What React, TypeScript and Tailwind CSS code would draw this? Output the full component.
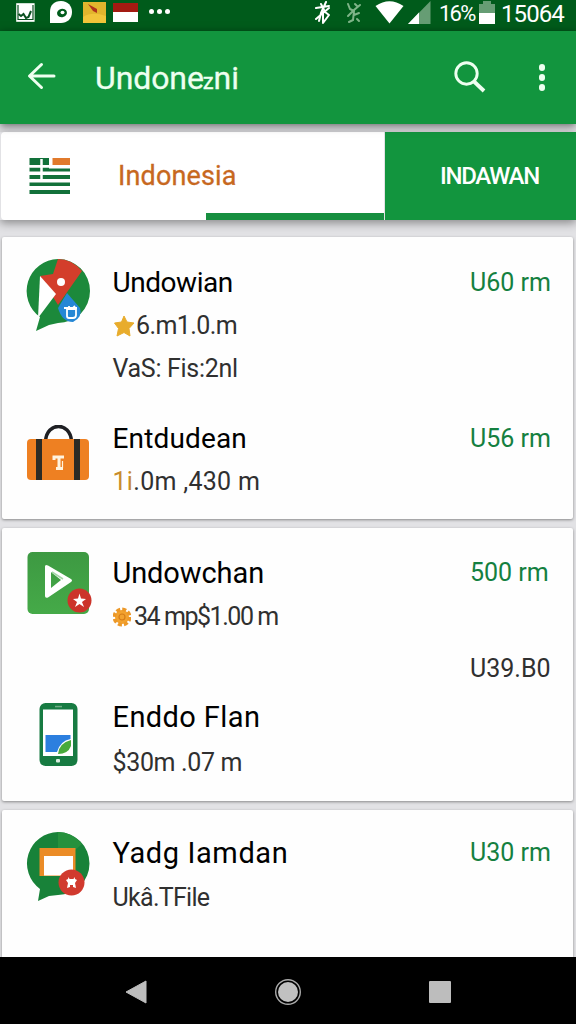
import type { ReactNode } from 'react';

type ListItemProps = {
  icon: ReactNode;
  title: string;
  titleClass: string;
  price: string;
  extraPrice?: string;
  className: string;
  children: ReactNode;
};

function StatusBar() {
  return (
    <div className="flex h-[31px] shrink-0 items-start bg-[#005b1b] text-white">
      <svg className="ml-[15px] mt-[2px]" width="21" height="22" viewBox="0 0 21 22">
        <rect x="1.2" y="1.2" width="18.4" height="18.6" fill="#fff" />
        <path d="M3 3V17.500H18V3" fill="none" stroke="#0a4f20" strokeWidth="1.200" />
        <path d="M3.500 12L6 14L8.500 12L11 16L13.500 15L16 9" fill="none" stroke="#0a4f20" strokeWidth="2" />
      </svg>
      <svg className="ml-[13px] mt-px" width="24" height="23" viewBox="0 0 24 23">
        <path d="M1 22V11C1 4 5 0 12 0C19 0 23 5 23 11C23 18 18 22 12 22Z" fill="#fff" />
        <ellipse cx="13" cy="12" rx="5" ry="4.2" fill="#005b1b" transform="rotate(-15 13 12)" />
        <ellipse cx="13.5" cy="11.5" rx="2" ry="1.7" fill="#fff" />
      </svg>
      <svg className="ml-[10px] mt-[2px]" width="23" height="21" viewBox="0 0 23 21">
        <rect width="23" height="21" fill="#e2b52d" />
        <path d="M0 15Q9 9 23 14V21H0Z" fill="#f2c53a" />
        <path d="M5 2L14 7L14 11L10 9Z" fill="#b0321c" />
      </svg>
      <div className="ml-[7px] mt-[3px] h-[19px] w-[25px] bg-white">
        <div className="h-[8.500px] bg-[#a31b12]" />
      </div>
      <div className="ml-[11px] mt-[9px] flex gap-[3px]">
        <span className="size-[5px] rounded-full bg-white" />
        <span className="size-[5px] rounded-full bg-white" />
        <span className="size-[5px] rounded-full bg-white" />
      </div>

      <svg className="ml-[143px] mt-px" width="19" height="24" viewBox="0 0 19 24" fill="none" stroke="#fff" strokeWidth="2" strokeLinecap="round" strokeLinejoin="round">
        <path d="M13 1L8 12L6 20M3 7L16 5M3 18L10 12L16 7" />
        <path d="M8 3L12 11L16 14L10 22V11" />
      </svg>
      <svg className="ml-[13px] mt-px" width="18" height="24" viewBox="0 0 18 24" fill="none" stroke="#7eb488" strokeWidth="2" strokeLinecap="round">
        <path d="M3 3L5 8L9 10M15 4L9 9L3 15M9 10L8 19L4 21M9 14L14 12M12 18L14 20M10 3L12 5" />
      </svg>
      <svg className="ml-[12px] mt-px" width="29" height="23" viewBox="0 0 29 23">
        <path d="M0.500 5Q14.500 -4.500 28.500 5L14.500 22.500Z" fill="#fff" />
      </svg>
      <svg className="ml-[4px] mt-px" width="23" height="23" viewBox="0 0 23 23">
        <path d="M22.500 0V23H0Z" fill="#669d74" />
        <path d="M11 11.500V23H0Z" fill="#fff" />
      </svg>
      <span className="ml-[8px] w-[36px] whitespace-nowrap text-[22px] leading-[27px] tracking-[-1.800px]">16%</span>
      <svg className="ml-[4px] mt-px" width="16" height="23" viewBox="0 0 16 23">
        <path d="M0 3H4V0H12V3H16V12H0Z" fill="#669d74" />
        <rect y="12" width="16" height="11" fill="#fff" />
      </svg>
      <span className="ml-[6px] text-[24px] leading-[28px] tracking-[-0.900px]">15064</span>
    </div>
  );
}

function AppBar() {
  return (
    <header className="z-10 flex h-[93px] shrink-0 items-center bg-[#12953e] text-white shadow-[0_2px_8px_rgba(0,0,0,0.55)]">
      <svg className="mb-[3px] ml-[27px]" width="29" height="28" viewBox="0 0 29 28" fill="none" stroke="#eefff0" strokeWidth="3" strokeLinecap="round" strokeLinejoin="round">
        <path d="M14.500 2.500L2.500 14L14.500 25.500M3 14H27" />
      </svg>
      <h1 className="ml-[39px] mt-[4px] w-[150px] whitespace-nowrap text-[32px] leading-10 tracking-[-0.100px] text-[#eefff0] [-webkit-text-stroke:0.300px_#eefff0]">
        Undone<span className="ml-[-1px] text-[22px]">z</span>ni
      </h1>
      <svg className="mb-[2px] ml-[208px]" width="34" height="34" viewBox="0 0 34 34" fill="none" stroke="#eefff0">
        <circle cx="13.500" cy="13.500" r="10.700" strokeWidth="2.900" />
        <path d="M21 21.500L31 31" strokeWidth="3.800" />
      </svg>
      <div className="ml-[51.500px] flex flex-col gap-[3.500px]">
        <span className="size-[6.500px] rounded-full bg-[#eefff0]" />
        <span className="size-[6.500px] rounded-full bg-[#eefff0]" />
        <span className="size-[6.500px] rounded-full bg-[#eefff0]" />
      </div>
    </header>
  );
}

function Tabs() {
  return (
    <div className="mt-2 flex h-[88px] shrink-0 shadow-[0_3px_9px_rgba(0,0,0,0.4)]">
      <div className="ml-px flex w-[383px] flex-col rounded-l bg-white">
        <div className="flex h-[80px] items-center pt-[7px]">
          <svg className="ml-[28px]" width="41" height="36" viewBox="0 0 41 36">
            <path d="M0.500 0H20V7H0.500ZM0.500 9.500H20V10.500H41V13.500H0.500ZM0.500 17H41V21H0.500ZM0.500 24.500H41V28H0.500ZM0.500 32H41V36H0.500Z" fill="#12713a" />
            <path d="M12.500 1V22M0.500 8.300H20" stroke="#fff" strokeWidth="2.500" />
            <rect x="23.500" y="0" width="17.500" height="7" fill="#e17a2c" />
          </svg>
          <span className="ml-[48px] mt-[2px] text-[27px] tracking-[0.150px] text-[#c7681f] [-webkit-text-stroke:0.300px_#c7681f]">
            Indonesia
          </span>
        </div>
        <div className="ml-auto mt-px h-[7px] w-[178.500px] bg-[#178f40]" />
      </div>
      <div className="ml-px flex flex-1 items-center bg-[#12953e] pl-[55px] text-[24px] font-medium tracking-[-1.300px] text-white">
        INDAWAN
      </div>
    </div>
  );
}

function Card({ className, children }: { className: string; children: ReactNode }) {
  return (
    <section className={`ml-[2px] mr-[3px] shrink-0 bg-[#fefefe] shadow-[0_1px_3px_rgba(0,0,0,0.4)] ${className}`}>
      {children}
    </section>
  );
}

function ListItem({ icon, title, titleClass, price, extraPrice, className, children }: ListItemProps) {
  return (
    <div className={`flex pl-6 pr-[22px] ${className}`}>
      <div className="mr-[20.500px] w-[66px] shrink-0">{icon}</div>
      <div className="mt-[7px] flex-1 whitespace-nowrap text-[25px] leading-8 text-[#303030]">
        <h2 className={`mb-[11px] leading-8 text-black ${titleClass}`}>{title}</h2>
        {children}
      </div>
      <div className="mt-[7px] w-[81px] whitespace-nowrap text-[25px] leading-8">
        <p className="text-[#148040]">{price}</p>
        {extraPrice && <p className="mt-16 text-[#303030]">{extraPrice}</p>}
      </div>
    </div>
  );
}

function MapIcon() {
  return (
    <svg width="66" height="74" viewBox="0 0 66 74">
      <path d="M32 0A32 32 0 1 1 32 64L23 66L10 72L14 58A32 32 0 0 1 32 0Z" fill="#1c893b" />
      <path d="M32 0Q46 0 56 12L32 46L14 17L27 15Z" fill="#d33e2b" />
      <path d="M14 17L30 35L12 59Z" fill="#fff" />
      <circle cx="35" cy="23" r="4" fill="#fff" />
      <path d="M41 34L54 49Q57 58 47 63Q36 63 32 49Z" fill="#2587d5" />
      <path d="M41 50V57Q41 59 43 59H47Q50 59 50 56V50ZM38 49H51M43 50V47M47 49L49 47" fill="none" stroke="#fff" strokeWidth="1.800" />
    </svg>
  );
}

function BriefcaseIcon() {
  return (
    <svg width="66" height="58" viewBox="0 0 66 58">
      <path d="M19.500 16C21 -3.500 44 -3.500 45.500 16" fill="none" stroke="#1f2024" strokeWidth="3.500" />
      <rect x="1" y="14" width="62" height="41" rx="4" fill="#ee8022" />
      <path d="M10 14H16V55H10ZM48 14H54V55H48Z" fill="#2c2b25" />
      <path d="M28 35V32H38M33 32V43M30 43.500H37" fill="none" stroke="#fff4df" strokeWidth="3" />
      <path d="M36.500 36V43" stroke="#fff4df" strokeWidth="1.200" />
    </svg>
  );
}

function PlayIcon() {
  return (
    <svg width="67" height="66" viewBox="0 0 67 66">
      <defs>
        <linearGradient id="play" x1="0" y1="0" x2="0" y2="1">
          <stop stopColor="#3d9942" />
          <stop offset="1" stopColor="#45aa48" />
        </linearGradient>
      </defs>
      <rect x="1.500" width="61.500" height="62" rx="5" fill="url(#play)" />
      <path d="M19 14.500Q19 12 22 13.500L45 27Q47 28.500 45 30L22 45.500Q19 46.500 19 44ZM25 20V36L35 28Z" fill="#fff" fillRule="evenodd" />
      <path d="M26 20L37 27" stroke="#a5d6a7" strokeWidth="1.500" />
      <circle cx="53.500" cy="48.500" r="12" fill="#cc342a" />
      <path d="M53.500 41.500L55 46.500L60 47L56 50L58 55L53.500 52L49 55L51 50L47 47L52 46.500Z" fill="#fff" />
    </svg>
  );
}

function PhoneIcon() {
  return (
    <svg className="ml-[13px]" width="39" height="64" viewBox="0 0 39 64">
      <rect x="0.500" width="38" height="63" rx="6" fill="#177b42" />
      <rect x="4" y="6.500" width="30" height="46.500" fill="#fff" />
      <rect x="16" y="2.800" width="7" height="1.500" fill="#70ad86" />
      <rect x="17" y="56" width="4" height="3.500" rx="1" fill="#d9ecdf" />
      <path d="M6.500 32H31.500V36Q21 38 18 49H6.500Z" fill="#2c7fdf" />
      <path d="M32 37V43Q29 51 19 51Q20 40 32 37Z" fill="#48aa3b" />
    </svg>
  );
}

function ChatIcon() {
  return (
    <svg width="66" height="72" viewBox="0 0 66 72">
      <path d="M32 0A31.500 31.500 0 0 1 32 63L23 64L12 69L14 57A31.500 31.500 0 0 1 32 0Z" fill="#188239" />
      <path d="M32 0A31.500 31.500 0 0 1 56 12L47 20H32Z" fill="#26913d" />
      <rect x="13.500" y="16" width="36" height="28" fill="#eb8c27" />
      <rect x="18" y="24" width="29" height="19.500" fill="#fff" />
      <circle cx="45.500" cy="50.500" r="13" fill="#d13a2e" />
      <path d="M42.500 45L43.500 47H47.500L48.500 45L49 47L51 48L49 51L50 56L47 55V53H44V55L41 56L42 51L40 48L42 47Z" fill="#fff" />
    </svg>
  );
}

function Star() {
  return (
    <svg className="ml-[1.500px] mr-px shrink-0" width="21" height="22" viewBox="0 0 21 22">
      <path d="M10 1L13 7L20 8L15 13.500L16 21L10 17.500L3 21L4.500 13.500L0.500 8L7.500 7Z" fill="#e8ac2c" stroke="#e8ac2c" strokeLinejoin="round" />
    </svg>
  );
}

function Badge() {
  return (
    <svg className="ml-[0.500px] mr-[3px] shrink-0" width="18" height="20" viewBox="0 0 18 20">
      <circle cx="9" cy="10" r="7" fill="#f2a22f" />
      <circle cx="9" cy="10" r="7.700" fill="none" stroke="#ec9828" strokeWidth="3.500" strokeDasharray="4 2.050" />
      <circle cx="9" cy="10" r="3" fill="none" stroke="#d77d18" strokeWidth="1.200" />
    </svg>
  );
}

function NavBar() {
  return (
    <nav className="z-10 flex h-[67px] shrink-0 items-center bg-black pt-[3px]">
      <svg className="ml-[125px]" width="22" height="24" viewBox="0 0 22 24">
        <path d="M1 12L21 1V23Z" fill="#bdbdbd" stroke="#bdbdbd" strokeLinejoin="round" />
      </svg>
      <svg className="ml-[127px]" width="28" height="28" viewBox="0 0 28 28">
        <circle cx="14" cy="14" r="12.300" fill="none" stroke="#aaa" strokeWidth="1.400" />
        <circle cx="14" cy="14" r="10" fill="#c1c1c1" />
      </svg>
      <div className="ml-[127px] size-[22px] rounded-[1px] bg-[#bdbdbd]" />
    </nav>
  );
}

export default function App() {
  return (
    <div className="flex h-[1024px] w-[576px] flex-col overflow-hidden bg-[#e2e2e5] font-[Roboto,sans-serif]">
      <StatusBar />
      <AppBar />
      <Tabs />

      <Card className="mt-[17px] h-[282px] rounded-[2px]">
        <ListItem className="pt-[23px]" icon={<div className="mt-[-1px]"><MapIcon /></div>} title="Undowian" titleClass="text-[28px] tracking-[-0.450px]" price="U60 rm">
          <p className="flex items-center tracking-[-0.600px]">
            <Star />
            6.m1.0.m
          </p>
          <p className="mt-[11px] tracking-[-0.300px]">VaS: Fis:2nl</p>
        </ListItem>
        <ListItem className="pt-[31px]" icon={<div className="mt-[9px]"><BriefcaseIcon /></div>} title="Entdudean" titleClass="text-[28px] tracking-[0.150px]" price="U56 rm">
          <p className="tracking-[0.300px]">
            <span className="text-[#c88c2c]">1i</span>.0m ,430 m
          </p>
        </ListItem>
      </Card>

      <Card className="mt-[9px] h-[273px] rounded-[2px]">
        <ListItem className="pt-[22px]" icon={<div className="mt-[2px]"><PlayIcon /></div>} title="Undowchan" titleClass="text-[29px] tracking-[-0.100px]" price="500 rm" extraPrice="U39.B0">
          <p className="flex items-center pt-px tracking-[-1.450px]">
            <Badge />
            34 mp$1.00 m
          </p>
        </ListItem>
        <ListItem className="pt-[9px]" icon={<div className="mt-[9px]"><PhoneIcon /></div>} title="Enddo Flan" titleClass="text-[29px] tracking-[0.400px]" price="">
          <p className="pt-[3px] tracking-[-0.350px]">$30m .07 m</p>
        </ListItem>
      </Card>

      <Card className="mt-[9px] h-[147px] rounded-t-[2px]">
        <ListItem className="pt-[20px]" icon={<div className="mt-[2px]"><ChatIcon /></div>} title="Yadg Iamdan" titleClass="text-[29px] tracking-[0.600px]" price="U30 rm">
          <p className="pt-[2px] tracking-[-0.700px]">Ukâ.TFile</p>
        </ListItem>
      </Card>
      <NavBar />
    </div>
  );
}
